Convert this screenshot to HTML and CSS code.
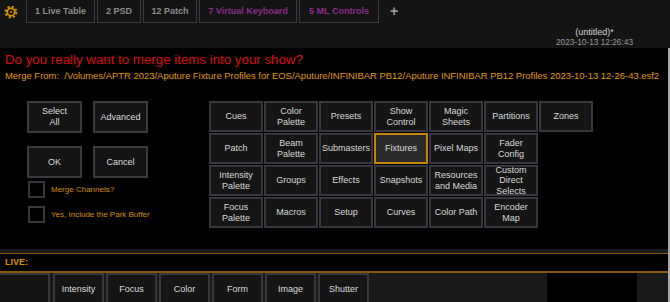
FILE: index.html
```html
<!DOCTYPE html>
<html>
<head>
<meta charset="utf-8">
<link rel="stylesheet" href="styles.css">
</head>
<body>
<div class="topbar">
  <div class="tabs">
    <div class="gear">
      <svg width="14" height="14" viewBox="0 0 14 14"><circle cx="7" cy="7" r="5.2" fill="none" stroke="#d4900a" stroke-width="2.4" stroke-dasharray="2.05 2.03"/><circle cx="7" cy="7" r="3.7" fill="none" stroke="#d4900a" stroke-width="1.7"/><circle cx="7" cy="7" r="1.1" fill="#d4900a"/></svg>
    </div>
    <div class="tab t1">1 Live Table</div>
    <div class="tab t2">2 PSD</div>
    <div class="tab t3">12 Patch</div>
    <div class="tab t4 purple">7 Virtual Keyboard</div>
    <div class="tab t5 purple">5 ML Controls</div>
    <div class="plus">+</div>
  </div>
  <div class="docrow">
    <div class="doc">
      <div class="docname">(untitled)*</div>
      <div class="docdate">2023-10-13 12:26:43</div>
    </div>
  </div>
</div>
<div class="lower">
  <div class="main">
    <div class="question">Do you really want to merge items into your show?</div>
    <div class="from">Merge From:&nbsp; /Volumes/APTR 2023/Aputure Fixture Profiles for EOS/Aputure/INFINIBAR PB12/Aputure INFINIBAR PB12 Profiles 2023-10-13 12-26-43.esf2</div>
    <div class="content">
      <div class="left">
        <div class="btns">
          <div class="btn">Select<br>All</div>
          <div class="btn">Advanced</div>
          <div class="btn">OK</div>
          <div class="btn">Cancel</div>
        </div>
        <div class="check"><span class="box"></span><span class="clabel">Merge Channels?</span></div>
        <div class="check"><span class="box"></span><span class="clabel">Yes, Include the Park Buffer</span></div>
      </div>
      <div class="grid">
        <div class="cell">Cues</div>
        <div class="cell">Color<br>Palette</div>
        <div class="cell">Presets</div>
        <div class="cell">Show<br>Control</div>
        <div class="cell">Magic<br>Sheets</div>
        <div class="cell">Partitions</div>
        <div class="cell">Zones</div>
        <div class="cell">Patch</div>
        <div class="cell">Beam<br>Palette</div>
        <div class="cell">Submasters</div>
        <div class="cell sel">Fixtures</div>
        <div class="cell">Pixel Maps</div>
        <div class="cell">Fader<br>Config</div>
        <div class="empty"></div>
        <div class="cell">Intensity<br>Palette</div>
        <div class="cell">Groups</div>
        <div class="cell">Effects</div>
        <div class="cell">Snapshots</div>
        <div class="cell">Resources<br>and Media</div>
        <div class="cell">Custom<br>Direct<br>Selects</div>
        <div class="empty"></div>
        <div class="cell">Focus<br>Palette</div>
        <div class="cell">Macros</div>
        <div class="cell">Setup</div>
        <div class="cell">Curves</div>
        <div class="cell">Color Path</div>
        <div class="cell">Encoder<br>Map</div>
        <div class="empty"></div>
      </div>
    </div>
  </div>
  <div class="sep"></div>
  <div class="live">LIVE:</div>
  <div class="bottom">
    <div class="pbtn"></div>
    <div class="pbtn">Intensity</div>
    <div class="pbtn">Focus</div>
    <div class="pbtn">Color</div>
    <div class="pbtn">Form</div>
    <div class="pbtn">Image</div>
    <div class="pbtn">Shutter</div>
    <div class="spacer"></div>
    <div class="blackbox"></div>
  </div>
</div>
</body>
</html>
```
FILE: styles.css
```css
* { box-sizing: border-box; }
html, body { margin: 0; padding: 0; }
body {
  width: 670px;
  height: 302px;
  overflow: hidden;
  background: #000;
  font-family: "Liberation Sans", Arial, sans-serif;
  display: flex;
  flex-direction: column;
}
.topbar {
  height: 48px;
  background: #141414;
  flex: none;
  display: flex;
  flex-direction: column;
}
.tabs {
  display: flex;
  align-items: flex-start;
  height: 23px;
}
.gear {
  width: 26px;
  height: 23px;
  display: flex;
  align-items: center;
  padding-left: 4px;
}
.tab {
  height: 23px;
  border: 1px solid #393940;
  border-top: none;
  margin-right: 2px;
  color: #8c8c8c;
  font-weight: bold;
  font-size: 9px;
  line-height: 22px;
  text-align: center;
  white-space: nowrap;
}
.t1 { width: 69px; }
.t2 { width: 44px; }
.t3 { width: 54px; }
.t4 { width: 98px; }
.t5 { width: 80px; }
.purple { color: #8f2b8c; }
.plus {
  color: #9a9a9a;
  font-size: 14px;
  font-weight: bold;
  line-height: 22px;
  margin-left: 9px;
}
.docrow {
  display: flex;
  justify-content: flex-end;
  padding-right: 37px;
  padding-top: 4px;
}
.doc { text-align: center; }
.docname { color: #d4d4d4; font-size: 9px; line-height: 10px; }
.docdate { color: #9a9a9a; font-size: 8.3px; line-height: 10px; }

.lower {
  flex: 1;
  display: flex;
  flex-direction: column;
  border-right: 2px solid #a8a8a8;
}
.main {
  height: 201px;
  flex: none;
  padding-left: 5px;
}
.question {
  color: #dd0b0b;
  font-size: 13.3px;
  line-height: 16px;
  margin-top: 4px;
  white-space: nowrap;
}
.from {
  color: #e09a10;
  font-size: 9.45px;
  line-height: 12px;
  margin-top: 2px;
  white-space: nowrap;
}
.content {
  display: flex;
  margin-top: 19px;
}
.left {
  width: 204px;
  padding-left: 22px;
  padding-top: 0;
}
.btns {
  display: grid;
  grid-template-columns: 55px 55px;
  grid-auto-rows: 32px;
  column-gap: 11px;
  row-gap: 13px;
}
.btn {
  border: 2px solid #3a3a40;
  background: #141414;
  color: #dcdcdc;
  font-size: 9px;
  line-height: 11px;
  display: flex;
  align-items: center;
  justify-content: center;
  text-align: center;
}
.check {
  display: flex;
  align-items: center;
  margin-top: 3px;
  margin-left: 1px;
  height: 17px;
}
.check + .check { margin-top: 8px; }
.box {
  width: 17px;
  height: 17px;
  border: 2px solid #38383c;
  background: #000;
  flex: none;
}
.clabel {
  color: #d48c0c;
  font-size: 8px;
  margin-left: 6px;
}
.grid {
  display: grid;
  grid-template-columns: repeat(7, 54px);
  grid-auto-rows: 31px;
  gap: 1px;
  width: 385px;
}
.cell {
  border: 2px solid #38363f;
  background: #151515;
  color: #d8d8d8;
  font-size: 9px;
  line-height: 10.5px;
  display: flex;
  align-items: center;
  justify-content: center;
  text-align: center;
}
.cell.sel {
  border-color: #c98300;
  background: #2b2b2b;
}
.sep {
  height: 4px;
  background: #1b1b1b;
  flex: none;
}
.live {
  height: 20px;
  flex: none;
  border-top: 1px solid #8a5a00;
  border-bottom: 2px solid #8a5a00;
  color: #d99000;
  font-weight: bold;
  font-size: 9px;
  line-height: 17px;
  padding-left: 5px;
}
.bottom {
  flex: 1;
  display: flex;
  background: #191919;
}
.pbtn {
  width: 51px;
  margin-right: 2px;
  border: 2px solid #38363f;
  border-bottom: none;
  background: #151515;
  color: #dadada;
  font-size: 9px;
  display: flex;
  align-items: center;
  justify-content: center;
}
.pbtn:first-child { width: 50px; margin-right: 3px; border-left: none; }
.spacer { width: 176px; }
.blackbox { width: 90px; background: #000; }
```
